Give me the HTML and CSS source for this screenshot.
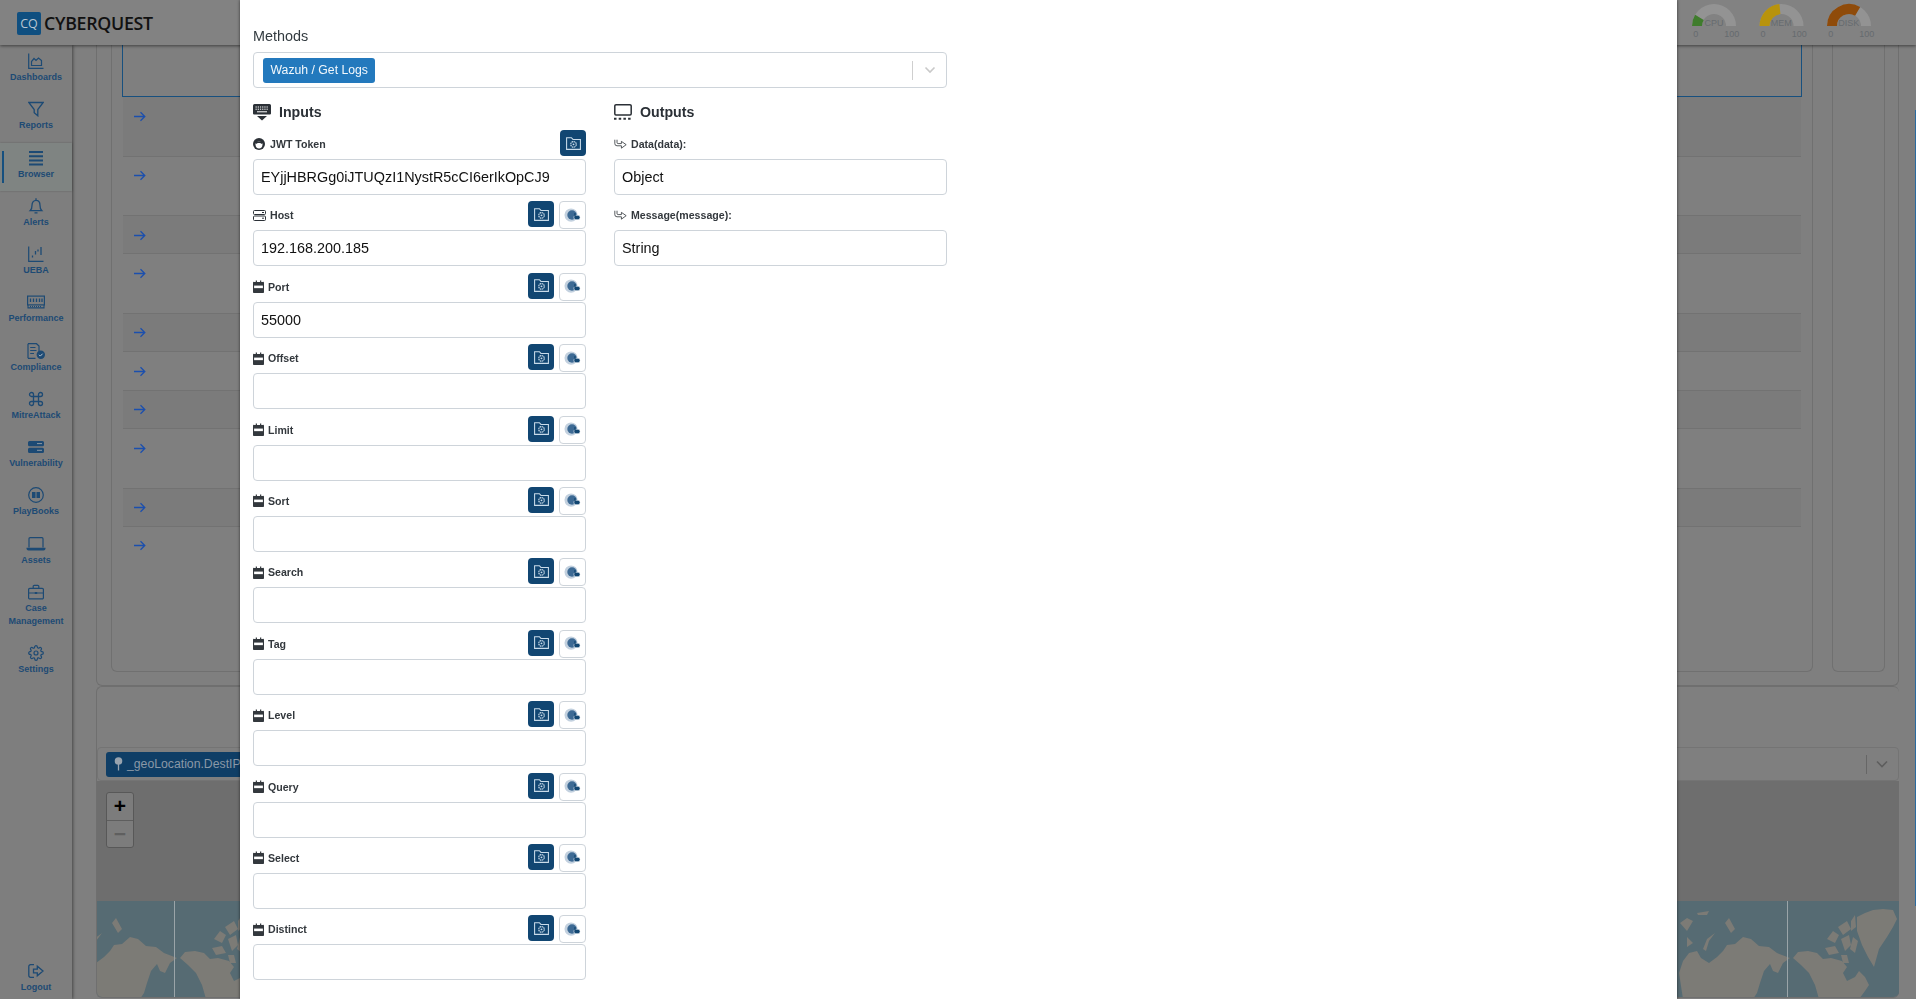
FILE: index.html
```html
<!DOCTYPE html>
<html lang="en">
<head>
    <meta charset="UTF-8">
    <meta name="viewport" content="width=device-width, initial-scale=1.0">
    <title>CyberQuest - Browser</title>
    <link rel="stylesheet" href="styles.css">
</head>
<body>
    <svg class="defs" aria-hidden="true">
        <symbol id="i-folder" viewBox="0 0 16 16"><path d="M1.500 13.500V2.500H6L7.500 4.200H14.500V13.500Z" fill="none" stroke="currentColor" stroke-width="1"/><circle cx="8" cy="8.800" r="2.600" fill="none" stroke="currentColor" stroke-width="1.100" stroke-dasharray="1.500 .5"/><circle cx="8" cy="8.800" r=".9" fill="currentColor"/></symbol>
        <symbol id="i-pie" viewBox="0 0 18 18"><circle cx="7.500" cy="8.500" r="7" fill="#c3d1df"/><circle cx="8.500" cy="8.500" r="5" fill="#3d6a94"/><rect x="10.500" y="8.800" width="6.500" height="4.600" rx="2" fill="#114672" stroke="#fff" stroke-width=".6"/><rect x="10.900" y="6.500" width="1.400" height="3.500" fill="#114672"/></symbol>
        <symbol id="i-cal" viewBox="0 0 12 14"><path d="M1.500 2H3V.5H4.300V2H7.700V.5H9V2H10.500A1.200 1.200 0 0 1 12 3.200V12.500A1.200 1.200 0 0 1 10.500 14H1.500A1.200 1.200 0 0 1 0 12.500V3.200A1.200 1.200 0 0 1 1.500 2Z" fill="currentColor"/><rect x="1.200" y="6" width="9.600" height="2.800" fill="#fff"/></symbol>
        <symbol id="i-out" viewBox="0 0 14 12"><path d="M.8 .8V5A2.400 2.400 0 0 0 3.200 7.400H8V10L13.200 6.200L8 2.600V5H4.400A1.200 1.200 0 0 1 3.200 3.800V.8" fill="none" stroke="currentColor" stroke-width=".9"/></symbol>
        <symbol id="i-dash" viewBox="0 0 16 16"><path d="M.7 .5V15.300H15.500M3.500 12.500V8.500L6 5.500L8 7.500L10.500 5L13.500 7.500V12.500Z" fill="none" stroke="currentColor" stroke-width="1.200"/></symbol>
        <symbol id="i-funnel" viewBox="0 0 16 16"><path d="M.8 1.500H15.200L9.800 8.500V14.800L6.200 11.800V8.500Z" fill="none" stroke="currentColor" stroke-width="1.300"/></symbol>
        <symbol id="i-bars" viewBox="0 0 16 16"><path d="M1 1H15V3H1ZM1 5.300H15V7.300H1ZM1 9.600H15V11.600H1ZM1 13.400H15V15.400H1Z" fill="currentColor"/></symbol>
        <symbol id="i-bell" viewBox="0 0 16 16"><path d="M8 .3V2.200M2.300 12.600C3.500 11.500 4 10 4 7.200 4 4.200 5.800 2.300 8 2.300S12 4.200 12 7.200C12 10 12.500 11.500 13.700 12.600ZM6.500 14.800H9.500" fill="none" stroke="currentColor" stroke-width="1.300"/></symbol>
        <symbol id="i-ueba" viewBox="0 0 16 16"><path d="M.7 .5V15.300H15.500" fill="none" stroke="currentColor" stroke-width="1.200"/><path d="M4.500 9.500V11.500M7.500 5V8.500M10 3.500V5.500M13 1V9" fill="none" stroke="currentColor" stroke-width="1.300"/></symbol>
        <symbol id="i-ram" viewBox="0 0 18 13"><rect x=".6" y=".6" width="16.800" height="8.800" fill="none" stroke="currentColor" stroke-width="1.200"/><path d="M3.500 3V6.500M6.500 3V6.500M9.500 3V6.500M12.500 3V6.500M15 3V6.500" stroke="currentColor" stroke-width="1.300"/><path d="M1 9.500V12.400H17V9.500" fill="none" stroke="currentColor" stroke-width="1.100"/><path d="M3 11H15" stroke="currentColor" stroke-width="1" stroke-dasharray="1 1"/></symbol>
        <symbol id="i-doc" viewBox="0 0 18 16"><path d="M1 .7H9.500L12 3V9M8.500 15.300H1Z" fill="none" stroke="currentColor" stroke-width="1.200"/><path d="M1 .7V15.300M3.200 4.500H8.500M3.200 7.500H9.500M3.200 10.500H7" fill="none" stroke="currentColor" stroke-width="1.200"/><circle cx="13.800" cy="11.800" r="4.200" fill="currentColor"/><path d="M12 11.800L13.300 13.100L15.600 10.700" fill="none" stroke="#b8c4d0" stroke-width="1"/></symbol>
        <symbol id="i-cmd" viewBox="0 0 16 16"><path d="M5.500 5.500H10.500V10.500H5.500ZM5.500 5.500H3.500A2 2 0 1 1 5.500 3.500ZM10.500 5.500V3.500A2 2 0 1 1 12.500 5.500ZM10.500 10.500H12.500A2 2 0 1 1 10.500 12.500ZM5.500 10.500V12.500A2 2 0 1 1 3.500 10.500Z" fill="none" stroke="currentColor" stroke-width="1.300"/></symbol>
        <symbol id="i-srv" viewBox="0 0 16 12"><path d="M1.500 0H14.500A1.500 1.500 0 0 1 16 1.500V3.800A1.500 1.500 0 0 1 14.500 5.300H1.500A1.500 1.500 0 0 1 0 3.800V1.500A1.500 1.500 0 0 1 1.500 0ZM1.500 6.700H14.500A1.500 1.500 0 0 1 16 8.200V10.500A1.500 1.500 0 0 1 14.500 12H1.500A1.500 1.500 0 0 1 0 10.500V8.200A1.500 1.500 0 0 1 1.500 6.700Z" fill="currentColor"/><path d="M9 2.600H14M9 9.300H14" stroke="#8d97a2" stroke-width="1"/></symbol>
        <symbol id="i-book" viewBox="0 0 16 16"><circle cx="8" cy="8" r="7.300" fill="none" stroke="currentColor" stroke-width="1.200"/><path d="M4 5H7.500V11H4ZM8.500 5H12V11H8.500Z" fill="currentColor"/></symbol>
        <symbol id="i-laptop" viewBox="0 0 20 14"><path d="M3 10.500V1.700A1 1 0 0 1 4 .7H16A1 1 0 0 1 17 1.700V10.500" fill="none" stroke="currentColor" stroke-width="1.200"/><path d="M.5 10.800H19.500V11.500A2 2 0 0 1 17.500 13.500H2.500A2 2 0 0 1 .5 11.500Z" fill="currentColor"/></symbol>
        <symbol id="i-case" viewBox="0 0 16 15"><path d="M1.800 3.800H14.200A1.200 1.200 0 0 1 15.400 5V13.200A1.200 1.200 0 0 1 14.200 14.400H1.800A1.200 1.200 0 0 1 .6 13.200V5A1.200 1.200 0 0 1 1.800 3.800ZM5.200 3.800V1.800A1 1 0 0 1 6.200 .8H9.800A1 1 0 0 1 10.800 1.800V3.800M.6 8.500H15.400" fill="none" stroke="currentColor" stroke-width="1.200"/><rect x="6.800" y="7.500" width="2.400" height="2" fill="currentColor"/></symbol>
        <symbol id="i-gear" viewBox="0 0 24 24"><circle cx="12" cy="12" r="3" fill="none" stroke="currentColor" stroke-width="1.800"/><path d="M19.400 15a1.650 1.650 0 0 0 .33 1.820l.06.06a2 2 0 0 1 0 2.830 2 2 0 0 1-2.830 0l-.06-.06a1.650 1.650 0 0 0-1.820-.33 1.650 1.650 0 0 0-1 1.510V21a2 2 0 0 1-2 2 2 2 0 0 1-2-2v-.09A1.650 1.650 0 0 0 9 19.400a1.650 1.650 0 0 0-1.820.33l-.06.06a2 2 0 0 1-2.830 0 2 2 0 0 1 0-2.830l.06-.06a1.650 1.650 0 0 0 .33-1.820 1.650 1.650 0 0 0-1.510-1H3a2 2 0 0 1-2-2 2 2 0 0 1 2-2h.09A1.650 1.650 0 0 0 4.600 9a1.650 1.650 0 0 0-.33-1.820l-.06-.06a2 2 0 0 1 0-2.830 2 2 0 0 1 2.830 0l.06.06a1.650 1.650 0 0 0 1.820.33H9a1.650 1.650 0 0 0 1-1.510V3a2 2 0 0 1 2-2 2 2 0 0 1 2 2v.09a1.650 1.650 0 0 0 1 1.510 1.650 1.650 0 0 0 1.820-.33l.06-.06a2 2 0 0 1 2.830 0 2 2 0 0 1 0 2.830l-.06.06a1.650 1.650 0 0 0-.33 1.820V9a1.650 1.650 0 0 0 1.510 1H21a2 2 0 0 1 2 2 2 2 0 0 1-2 2h-.09a1.650 1.650 0 0 0-1.510 1z" fill="none" stroke="currentColor" stroke-width="1.800"/></symbol>
        <symbol id="i-logout" viewBox="0 0 16 14"><path d="M6 .7H2.500A1.700 1.700 0 0 0 .8 2.400V11.600A1.700 1.700 0 0 0 2.500 13.300H6M5.500 5.200H9.300V2.200L15 7L9.300 11.800V8.800H5.500Z" fill="none" stroke="currentColor" stroke-width="1.300"/></symbol>
        <symbol id="i-arrow" viewBox="0 0 12 10"><path d="M0 5H10.500M6.500 .8L10.800 5L6.500 9.200" fill="none" stroke="currentColor" stroke-width="1.300"/></symbol>
    </svg>

    <header class="topbar">
        <div class="brand">
            <span class="brand-mark">CQ</span>
            <span class="brand-name">CYBERQUEST</span>
        </div>
        <svg class="gauges" width="220" height="40" viewBox="0 0 220 40">
            <path d="M2 26A22 22 0 0 1 46 26H36A12 12 0 0 0 12 26Z" fill="#939393"/>
            <path d="M2 26A22 22 0 0 1 5.100 14.800L13.700 19.900A12 12 0 0 0 12 26Z" fill="#3f7c2c"/>
            <text x="24" y="26" class="g-name" text-anchor="middle">CPU</text>
            <text x="5.700" y="37" class="g-num" text-anchor="middle">0</text>
            <text x="41.700" y="37" class="g-num" text-anchor="middle">100</text>

            <path d="M69.500 26A22 22 0 0 1 113.500 26H103.500A12 12 0 0 0 79.500 26Z" fill="#939393"/>
            <path d="M69.500 26A22 22 0 0 1 89.400 4.100L90.400 14.100A12 12 0 0 0 79.500 26Z" fill="#b8930c"/>
            <text x="91.300" y="26" class="g-name" text-anchor="middle">MEM</text>
            <text x="73" y="37" class="g-num" text-anchor="middle">0</text>
            <text x="109.300" y="37" class="g-num" text-anchor="middle">100</text>

            <path d="M137 26A22 22 0 0 1 181 26H171A12 12 0 0 0 147 26Z" fill="#939393"/>
            <path d="M137 26A22 22 0 0 1 170.200 7.100L165.100 15.700A12 12 0 0 0 147 26Z" fill="#8f4b0a"/>
            <text x="158.700" y="26" class="g-name" text-anchor="middle">DISK</text>
            <text x="140.700" y="37" class="g-num" text-anchor="middle">0</text>
            <text x="176.700" y="37" class="g-num" text-anchor="middle">100</text>
        </svg>
    </header>

    <div class="layout">
        <nav class="sidebar">
            <a class="nav-item"><svg class="nav-icon w16"><use href="#i-dash"/></svg>Dashboards</a>
            <a class="nav-item"><svg class="nav-icon w16"><use href="#i-funnel"/></svg>Reports</a>
            <a class="nav-item active"><svg class="nav-icon w16"><use href="#i-bars"/></svg>Browser</a>
            <a class="nav-item"><svg class="nav-icon w16"><use href="#i-bell"/></svg>Alerts</a>
            <a class="nav-item"><svg class="nav-icon w16"><use href="#i-ueba"/></svg>UEBA</a>
            <a class="nav-item"><svg class="nav-icon w18"><use href="#i-ram"/></svg>Performance</a>
            <a class="nav-item"><svg class="nav-icon w18"><use href="#i-doc"/></svg>Compliance</a>
            <a class="nav-item"><svg class="nav-icon w16"><use href="#i-cmd"/></svg>MitreAttack</a>
            <a class="nav-item"><svg class="nav-icon w16"><use href="#i-srv"/></svg>Vulnerability</a>
            <a class="nav-item"><svg class="nav-icon w16"><use href="#i-book"/></svg>PlayBooks</a>
            <a class="nav-item"><svg class="nav-icon w20"><use href="#i-laptop"/></svg>Assets</a>
            <a class="nav-item"><svg class="nav-icon w16"><use href="#i-case"/></svg>Case<br>Management</a>
            <a class="nav-item"><svg class="nav-icon w16"><use href="#i-gear"/></svg>Settings</a>
            <a class="nav-item logout"><svg class="nav-icon w16"><use href="#i-logout"/></svg>Logout</a>
        </nav>

        <main class="content">
            <section class="card top-card">
                <div class="panel table-panel">
                    <div class="highlight-box"></div>
                    <div class="row tall shaded"><svg class="row-arrow"><use href="#i-arrow"/></svg></div>
                    <div class="row tall"><svg class="row-arrow"><use href="#i-arrow"/></svg></div>
                    <div class="row shaded"><svg class="row-arrow"><use href="#i-arrow"/></svg></div>
                    <div class="row tall"><svg class="row-arrow"><use href="#i-arrow"/></svg></div>
                    <div class="row shaded"><svg class="row-arrow"><use href="#i-arrow"/></svg></div>
                    <div class="row"><svg class="row-arrow"><use href="#i-arrow"/></svg></div>
                    <div class="row shaded"><svg class="row-arrow"><use href="#i-arrow"/></svg></div>
                    <div class="row tall"><svg class="row-arrow"><use href="#i-arrow"/></svg></div>
                    <div class="row shaded"><svg class="row-arrow"><use href="#i-arrow"/></svg></div>
                    <div class="row last"><svg class="row-arrow"><use href="#i-arrow"/></svg></div>
                </div>
                <div class="panel side-panel"></div>
            </section>

            <section class="card map-card">
                <div class="map-select">
                    <span class="map-tag">
                        <svg class="pin" width="9" height="14" viewBox="0 0 9 14"><circle cx="4.500" cy="4" r="3.800" fill="#98a3ae"/><path d="M4.500 7V13.500" stroke="#98a3ae" stroke-width="1.300"/></svg>
                        _geoLocation.DestIP
                    </span>
                    <span class="select-end">
                        <span class="select-sep dark"></span>
                        <svg class="chevron" width="12" height="8" viewBox="0 0 12 8"><path d="M1 1.500L6 6.500L11 1.500" fill="none" stroke="#5e5e5e" stroke-width="1.600"/></svg>
                    </span>
                </div>
                <div class="map">
                    <div class="zoom-ctl">
                        <span class="zoom-btn">+</span>
                        <span class="zoom-btn off">−</span>
                    </div>
                    <svg class="tiles" width="1802" height="98" viewBox="0 0 1802 98">
                        <g id="land" fill="#7c7b76">
                            <path d="M1586 98L1582 72 1586 60 1592 52 1600 50 1604 57 1612 62 1620 56 1626 50 1630 44 1638 43 1646 36 1654 38 1662 45 1672 46 1680 52 1693 57 1686 62 1681 72 1676 70 1673 63 1667 70 1663 82 1660 92 1656 98Z"/>
                            <path d="M1696 57L1701 51 1711 50 1720 52 1726 58 1734 57 1745 60 1750 66 1746 72 1750 80 1758 76 1762 70 1768 76 1772 84 1768 90 1762 98 1722 98 1718 84 1712 72 1704 64Z"/>
                            <path d="M1760 16L1768 12 1776 9 1786 8 1796 9 1800 18 1796 26 1790 36 1782 48 1777 66 1771 56 1765 44 1760 30Z"/>
                            <path d="M1730 38L1736 30 1742 34 1738 42ZM1741 26L1750 20 1754 28 1746 34ZM1754 20L1758 14 1759 26 1754 30ZM1744 38L1752 34 1754 44 1748 50ZM1756 36L1761 40 1758 52 1753 48ZM1728 47L1738 45 1742 52 1732 54ZM1744 54L1750 54 1752 62 1746 62Z"/>
                            <path d="M1583 22L1590 17 1596 20 1590 30ZM1628 22L1632 17 1638 28 1634 32ZM1600 12L1612 10 1610 14 1601 14ZM1606 48L1610 38 1618 32 1612 40 1609 50ZM1590 36L1596 42 1590 46Z"/>
                        </g>
                        <use href="#land" x="-1613"/>
                        <path d="M77.500 0V98M1690.500 0V98" stroke="#9aa4a8" stroke-width="1"/>
                    </svg>
                </div>
            </section>
        </main>
    </div>
    <div class="edge-line"></div>

    <div class="modal">
        <label class="field-title">Methods</label>
        <div class="select">
            <span class="tag">Wazuh / Get Logs</span>
            <span class="select-end">
                <span class="select-sep"></span>
                <svg class="chevron" width="12" height="8" viewBox="0 0 12 8"><path d="M1.500 1.500L6 6L10.500 1.500" fill="none" stroke="#c9c9c9" stroke-width="1.600"/></svg>
            </span>
        </div>

        <div class="columns">
            <div class="column">
                <h3 class="col-title">
                    <svg width="18" height="17" viewBox="0 0 18 17"><path d="M1.500 0H16.500A1.500 1.500 0 0 1 18 1.500V8.500A1.500 1.500 0 0 1 16.500 10.500H1.500A1.500 1.500 0 0 1 0 8.500V1.500A1.500 1.500 0 0 1 1.500 0Z" fill="currentColor"/><path d="M2.500 3H15.500M2.500 5.200H15.500" stroke="#fff" stroke-width="1" stroke-dasharray="1.300 .9"/><path d="M4 7.800H14" stroke="#fff" stroke-width="1"/><path d="M4 12H14L9 16.500Z" fill="currentColor"/></svg>
                    Inputs
                </h3>

                <div class="param">
                    <div class="param-head">
                        <span class="param-label"><svg width="12" height="12" viewBox="0 0 12 12"><circle cx="6" cy="6" r="6" fill="#2b3036"/><path d="M2.500 6.500C2.500 4.500 4 3.500 6 3.500S9.500 4.500 9.500 6.500C9.500 9 8 10.500 6 10.500S2.500 9 2.500 6.500Z" fill="#fff"/><path d="M3 6C4 4.500 8 4.500 9 6L9 3.500H3Z" fill="#2b3036"/></svg>JWT Token</span>
                        <button class="btn-dark"><svg><use href="#i-folder"/></svg></button>
                    </div>
                    <input class="text-input" value="EYjjHBRGg0iJTUQzI1NystR5cCI6erIkOpCJ9">
                </div>

                <div class="param">
                    <div class="param-head">
                        <span class="param-label host"><svg width="13" height="11" viewBox="0 0 13 11"><path d="M1.500 .5H11.500A1 1 0 0 1 12.500 1.500V3.500A1 1 0 0 1 11.500 4.500H1.500A1 1 0 0 1 .5 3.500V1.500A1 1 0 0 1 1.500 .5ZM1.500 6H11.500A1 1 0 0 1 12.500 7V9.500A1 1 0 0 1 11.500 10.500H1.500A1 1 0 0 1 .5 9.500V7A1 1 0 0 1 1.500 6ZM9 2.500H11M9 8.200H11" fill="none" stroke="#2b3036" stroke-width="1"/></svg>Host</span>
                        <button class="btn-dark"><svg><use href="#i-folder"/></svg></button>
                        <button class="btn-light"><svg><use href="#i-pie"/></svg></button>
                    </div>
                    <input class="text-input" value="192.168.200.185">
                </div>

                <div class="param">
                    <div class="param-head">
                        <span class="param-label cal"><svg width="11" height="13"><use href="#i-cal"/></svg>Port</span>
                        <button class="btn-dark"><svg><use href="#i-folder"/></svg></button>
                        <button class="btn-light"><svg><use href="#i-pie"/></svg></button>
                    </div>
                    <input class="text-input" value="55000">
                </div>

                <div class="param">
                    <div class="param-head">
                        <span class="param-label cal"><svg width="11" height="13"><use href="#i-cal"/></svg>Offset</span>
                        <button class="btn-dark"><svg><use href="#i-folder"/></svg></button>
                        <button class="btn-light"><svg><use href="#i-pie"/></svg></button>
                    </div>
                    <input class="text-input">
                </div>

                <div class="param">
                    <div class="param-head">
                        <span class="param-label cal"><svg width="11" height="13"><use href="#i-cal"/></svg>Limit</span>
                        <button class="btn-dark"><svg><use href="#i-folder"/></svg></button>
                        <button class="btn-light"><svg><use href="#i-pie"/></svg></button>
                    </div>
                    <input class="text-input">
                </div>

                <div class="param">
                    <div class="param-head">
                        <span class="param-label cal"><svg width="11" height="13"><use href="#i-cal"/></svg>Sort</span>
                        <button class="btn-dark"><svg><use href="#i-folder"/></svg></button>
                        <button class="btn-light"><svg><use href="#i-pie"/></svg></button>
                    </div>
                    <input class="text-input">
                </div>

                <div class="param">
                    <div class="param-head">
                        <span class="param-label cal"><svg width="11" height="13"><use href="#i-cal"/></svg>Search</span>
                        <button class="btn-dark"><svg><use href="#i-folder"/></svg></button>
                        <button class="btn-light"><svg><use href="#i-pie"/></svg></button>
                    </div>
                    <input class="text-input">
                </div>

                <div class="param">
                    <div class="param-head">
                        <span class="param-label cal"><svg width="11" height="13"><use href="#i-cal"/></svg>Tag</span>
                        <button class="btn-dark"><svg><use href="#i-folder"/></svg></button>
                        <button class="btn-light"><svg><use href="#i-pie"/></svg></button>
                    </div>
                    <input class="text-input">
                </div>

                <div class="param">
                    <div class="param-head">
                        <span class="param-label cal"><svg width="11" height="13"><use href="#i-cal"/></svg>Level</span>
                        <button class="btn-dark"><svg><use href="#i-folder"/></svg></button>
                        <button class="btn-light"><svg><use href="#i-pie"/></svg></button>
                    </div>
                    <input class="text-input">
                </div>

                <div class="param">
                    <div class="param-head">
                        <span class="param-label cal"><svg width="11" height="13"><use href="#i-cal"/></svg>Query</span>
                        <button class="btn-dark"><svg><use href="#i-folder"/></svg></button>
                        <button class="btn-light"><svg><use href="#i-pie"/></svg></button>
                    </div>
                    <input class="text-input">
                </div>

                <div class="param">
                    <div class="param-head">
                        <span class="param-label cal"><svg width="11" height="13"><use href="#i-cal"/></svg>Select</span>
                        <button class="btn-dark"><svg><use href="#i-folder"/></svg></button>
                        <button class="btn-light"><svg><use href="#i-pie"/></svg></button>
                    </div>
                    <input class="text-input">
                </div>

                <div class="param">
                    <div class="param-head">
                        <span class="param-label cal"><svg width="11" height="13"><use href="#i-cal"/></svg>Distinct</span>
                        <button class="btn-dark"><svg><use href="#i-folder"/></svg></button>
                        <button class="btn-light"><svg><use href="#i-pie"/></svg></button>
                    </div>
                    <input class="text-input">
                </div>
            </div>

            <div class="column">
                <h3 class="col-title">
                    <svg width="18" height="16" viewBox="0 0 18 16"><path d="M2 .8H16A1.200 1.200 0 0 1 17.200 2V9.800A1.200 1.200 0 0 1 16 11H2A1.200 1.200 0 0 1 .8 9.800V2A1.200 1.200 0 0 1 2 .8Z" fill="none" stroke="currentColor" stroke-width="1.500"/><path d="M0 14.700H18" stroke="currentColor" stroke-width="2" stroke-dasharray="2.500 2.200"/></svg>
                    Outputs
                </h3>

                <div class="param">
                    <div class="param-head">
                        <span class="param-label out"><svg width="13" height="11"><use href="#i-out"/></svg>Data(data):</span>
                    </div>
                    <input class="text-input" value="Object">
                </div>

                <div class="param">
                    <div class="param-head">
                        <span class="param-label out"><svg width="13" height="11"><use href="#i-out"/></svg>Message(message):</span>
                    </div>
                    <input class="text-input" value="String">
                </div>
            </div>
        </div>
    </div>
</body>
</html>
```

FILE: styles.css
```css
* {
    box-sizing: border-box;
}
html, body {
    height: 100%;
}
body {
    margin: 0;
    height: 999px;
    overflow: hidden;
    background: #7f7f7f;
    font-family: "Liberation Sans", Arial, sans-serif;
    color: #2b3036;
}
.defs {
    position: absolute;
    width: 0;
    height: 0;
}

/* top bar */
.topbar {
    display: flex;
    justify-content: space-between;
    align-items: flex-start;
    height: 45px;
    background: #828282;
    box-shadow: 0 1px 3px rgba(0,0,0,0.5);
    position: relative;
    z-index: 2;
}
.brand {
    display: flex;
    align-items: center;
    gap: 3px;
    margin: 11px 0 0 17px;
}
.brand-mark {
    width: 24px;
    height: 23px;
    background: #0f4f80;
    border-radius: 2px;
    color: #b9c6d2;
    font-family: "Open Sans", sans-serif;
    font-size: 12.5px;
    line-height: 23px;
    text-align: center;
}
.brand-name {
    font-family: "Open Sans", sans-serif;
    font-size: 17.8px;
    font-weight: 600;
    color: #111;
    letter-spacing: -0.3px;
}
.gauges {
    margin-right: 6px;
    flex-shrink: 0;
}
.g-name {
    font-size: 9px;
    fill: #666b6f;
}
.g-num {
    font-size: 9px;
    fill: #666b6f;
}

/* sidebar */
.layout {
    display: flex;
    height: 954px;
}
.sidebar {
    width: 72px;
    flex-shrink: 0;
    display: flex;
    flex-direction: column;
    padding-top: 1px;
    background: #7e7e7e;
    box-shadow: 1px 0 3px rgba(0,0,0,0.45);
    position: relative;
    z-index: 1;
}
.nav-item {
    display: block;
    padding: 7px 0 10.27px;
    text-align: center;
    font-size: 9px;
    font-weight: bold;
    line-height: 13px;
    color: #1d4a74;
    position: relative;
}
.nav-item.active {
    background: #7f8482;
    box-shadow: 0 0 2px rgba(0,0,0,0.25);
}
.nav-item.active::before {
    content: "";
    position: absolute;
    left: 2px;
    top: 8px;
    bottom: 8px;
    width: 2px;
    background: #16507f;
}
.nav-item.logout {
    margin-top: auto;
    padding-bottom: 5px;
}
.nav-icon {
    display: block;
    margin: 0 auto 2px;
    height: 16px;
}
.w16 { width: 16px; }
.w18 { width: 18px; }
.w20 { width: 20px; }

/* page behind the modal */
.content {
    flex: 1;
    padding: 0 17px 0 24px;
    min-width: 0;
}
.card {
    border: 1px solid #6f6f6f;
    border-radius: 6px;
}
.top-card {
    display: flex;
    gap: 19px;
    height: 641px;
    padding: 0 14px 13px 14px;
    border-top: none;
    border-radius: 0 0 6px 6px;
}
.panel {
    border: 1px solid #707070;
    border-top: none;
    border-radius: 0 0 6px 6px;
}
.table-panel {
    width: 1702px;
    flex-shrink: 0;
    padding: 0 10px;
}
.side-panel {
    width: 53px;
    flex-shrink: 0;
}
.highlight-box {
    height: 52px;
    border: 1px solid #17507f;
    border-top: none;
}
.row {
    height: 38.4px;
    margin: 0 1px;
    padding: 13.5px 0 0 11px;
    border-bottom: 1px solid #727272;
}
.row.tall {
    height: 59.5px;
}
.row.shaded {
    background: #7b7b7b;
}
.row.last {
    border-bottom: none;
}
.row-arrow {
    display: block;
    width: 12px;
    height: 11px;
    color: #1b4fae;
}
.map-card {
    height: 312px;
    padding-top: 60px;
    overflow: hidden;
    border-right: none;
}
.map-select {
    display: flex;
    justify-content: space-between;
    align-items: center;
    height: 34px;
    padding: 0 1px 0 8px;
    border: 1px solid #747474;
    border-radius: 4px;
    background: #7f7f7f;
}
.map-select .select-end {
    gap: 9px;
}
.map-tag {
    display: flex;
    align-items: center;
    gap: 4px;
    width: 300px;
    height: 25px;
    padding-left: 8px;
    background: #0f3e66;
    border-radius: 3px;
    font-size: 12.24px;
    color: #8a98a6;
}
.map {
    position: relative;
    height: 218px;
    padding-top: 120px;
    background: #6e6e6e;
}
.tiles {
    display: block;
    background: #566b73;
}
.zoom-ctl {
    position: absolute;
    left: 9px;
    top: 11px;
    width: 28px;
    border: 1px solid #585858;
    border-radius: 3px;
    background: #7c7c7c;
}
.zoom-btn {
    display: block;
    height: 27px;
    font-size: 21px;
    font-weight: bold;
    line-height: 26px;
    text-align: center;
    color: #000;
}
.zoom-btn.off {
    border-top: 1px solid #5e5e5e;
    color: #5f5f5f;
}
.edge-line {
    position: absolute;
    right: 0;
    top: 110px;
    width: 1px;
    height: 796px;
    background: #2a6ba0;
}

/* modal */
.modal {
    position: fixed;
    z-index: 10;
    left: 239.5px;
    top: 0;
    width: 1437px;
    height: 999px;
    padding: 28px 0 0 13.5px;
    background: #fff;
    box-shadow: 0 0 3px rgba(0,0,0,0.6);
}
.field-title {
    display: block;
    height: 16px;
    margin-bottom: 8px;
    font-size: 14.4px;
    line-height: 16px;
    color: #333b40;
}
.select {
    display: flex;
    justify-content: space-between;
    align-items: center;
    width: 694px;
    height: 36px;
    padding: 0 1px 0 9px;
    border: 1px solid #ced4da;
    border-radius: 4px;
}
.tag {
    height: 25px;
    padding: 0 7.5px;
    background: #2379bd;
    border-radius: 3px;
    font-size: 12.24px;
    line-height: 24px;
    color: #f3f8fc;
}
.select-end {
    display: flex;
    align-items: center;
    gap: 11px;
    padding-right: 9px;
}
.select-sep {
    width: 1px;
    height: 19px;
    background: #cfcfcf;
}
.select-sep.dark {
    background: #666;
}
.chevron {
    display: block;
}
.columns {
    display: flex;
    gap: 28px;
    width: 694px;
}
.column {
    width: 333px;
}
.col-title {
    display: flex;
    align-items: center;
    gap: 8px;
    height: 20px;
    margin: 14px 0 8px;
    font-size: 14.2px;
    font-weight: bold;
    color: #2b3036;
}
.param {
    margin-bottom: 6.4px;
}
.param-head {
    display: flex;
    align-items: flex-start;
    gap: 5px;
    height: 28px;
    margin-bottom: 1px;
}
.param-label {
    display: flex;
    align-items: center;
    gap: 5px;
    flex: 1;
    height: 28px;
    font-size: 10.6px;
    font-weight: bold;
    color: #33383d;
}
.param-label.cal,
.param-label.host,
.param-label.out {
    gap: 4px;
}
.btn-dark, .btn-light {
    display: flex;
    align-items: center;
    justify-content: center;
    padding: 0;
    border-radius: 4px;
    cursor: pointer;
}
.btn-dark {
    width: 26px;
    height: 26px;
    background: #114672;
    border: none;
    color: #c9dbe9;
}
.btn-dark svg {
    width: 17px;
    height: 17px;
}
.btn-light {
    width: 27px;
    height: 28px;
    background: #fff;
    border: 1px solid #ced4da;
}
.btn-light svg {
    width: 17px;
    height: 17px;
}
.text-input {
    display: block;
    width: 100%;
    height: 36px;
    padding: 0 7px;
    border: 1px solid #ced4da;
    border-radius: 4px;
    background: #fff;
    font-family: "Liberation Sans", Arial, sans-serif;
    font-size: 14.4px;
    color: #111;
}
```
